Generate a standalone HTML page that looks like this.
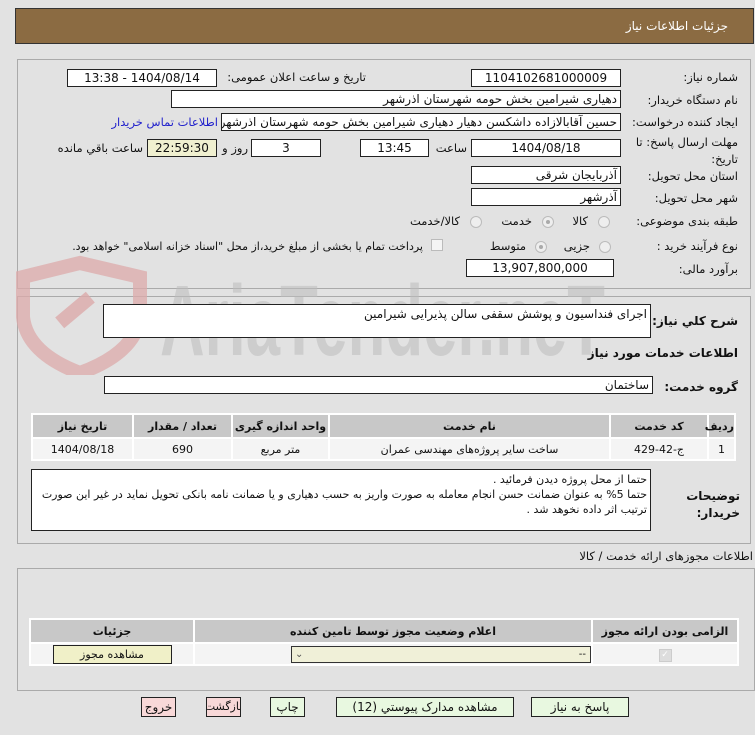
<!DOCTYPE html>
<html><head><meta charset="utf-8"><style>
*{box-sizing:border-box;margin:0;padding:0}
body{width:755px;height:735px;background:#e2e2e2;font-family:"DejaVu Sans","Liberation Sans",sans-serif;font-size:11.5px;color:#111;position:relative;overflow:hidden;direction:rtl}
.a{position:absolute;white-space:nowrap}
.box{position:absolute;background:#fff;border:1px solid #222;height:18px;line-height:16px;text-align:center;font-size:12px;overflow:hidden;white-space:nowrap}
.lbl{position:absolute;white-space:nowrap;text-align:right}
.panel{position:absolute;border:1px solid #aaa}
.radio{position:absolute;width:12px;height:12px;border-radius:50%;border:1px solid #bbb;background:#eee}
.radio.on::after{content:"";position:absolute;left:3px;top:3px;width:4px;height:4px;border-radius:50%;background:#aaa}
table{border-collapse:separate;border-spacing:2px;position:absolute;background:#fff;font-size:11px;table-layout:fixed}
th{background:#c8c8c8;font-weight:bold;height:22px}
td{background:#f4f4f4;text-align:center;height:20px}
.btn{position:absolute;top:697px;height:20px;border:1px solid #222;text-align:center;line-height:18px;font-size:12px;white-space:nowrap;overflow:hidden}
</style></head><body>
<div class="a" style="left:15px;top:8px;width:739px;height:36px;background:#8b6b42;border:1px solid #333"></div>
<div class="a" style="right:27px;top:19px;color:#fff;font-size:12px">جزئیات اطلاعات نیاز</div>

<div class="panel" style="left:17px;top:59px;width:734px;height:230px"></div>
<div class="panel" style="left:17px;top:296px;width:734px;height:248px"></div>

<svg class="a" style="left:15px;top:255px;direction:ltr" width="600" height="120" viewBox="0 0 600 120" direction="ltr">
<path d="M65 8 L125 22 L125 62 Q120 98 65 118 Q12 98 8 62 L8 22 Z" fill="none" stroke="#dcaaaa" stroke-width="14" opacity=".75"/>
<rect x="40" y="48" width="40" height="14" fill="#dcaaaa" opacity=".8" transform="rotate(-40 60 55)"/>
<text x="145" y="100" text-anchor="start" direction="ltr" font-family="Liberation Sans" font-size="100" fill="#bdbdbd" opacity=".55" font-weight="bold" textLength="445" lengthAdjust="spacingAndGlyphs">AriaTender.neT</text>
</svg>

<div class="lbl" style="right:17px;top:70px">شماره نیاز:</div>
<div class="box" style="left:471px;top:69px;width:150px">1104102681000009</div>
<div class="lbl" style="right:389px;top:70px">تاریخ و ساعت اعلان عمومی:</div>
<div class="box" style="left:67px;top:69px;width:150px">1404/08/14 - 13:38</div>

<div class="lbl" style="right:17px;top:93px">نام دستگاه خریدار:</div>
<div class="box" style="left:171px;top:90px;width:450px;text-align:right;padding-right:3px">دهیاری شیرامین بخش حومه شهرستان اذرشهر</div>

<div class="lbl" style="right:17px;top:115px">ایجاد کننده درخواست:</div>
<div class="box" style="left:221px;top:113px;width:400px;text-align:right;padding-right:3px">حسین آقابالازاده داشکسن دهیار دهیاری شیرامین بخش حومه شهرستان اذرشهر</div>
<div class="lbl" style="right:537px;top:115px;color:#22c">اطلاعات تماس خریدار</div>

<div class="lbl" style="right:17px;top:135px">مهلت ارسال پاسخ: تا</div>
<div class="lbl" style="right:17px;top:152px">تاریخ:</div>
<div class="box" style="left:471px;top:139px;width:150px">1404/08/18</div>
<div class="lbl" style="right:288px;top:141px">ساعت</div>
<div class="box" style="left:360px;top:139px;width:69px">13:45</div>
<div class="box" style="left:251px;top:139px;width:70px">3</div>
<div class="lbl" style="right:507px;top:141px">روز و</div>
<div class="box" style="left:147px;top:139px;width:70px;background:#f0f0d0">22:59:30</div>
<div class="lbl" style="right:612px;top:141px">ساعت باقي مانده</div>

<div class="lbl" style="right:17px;top:169px">استان محل تحویل:</div>
<div class="box" style="left:471px;top:166px;width:150px;text-align:right;padding-right:3px">آذربایجان شرقی</div>
<div class="lbl" style="right:17px;top:191px">شهر محل تحویل:</div>
<div class="box" style="left:471px;top:188px;width:150px;text-align:right;padding-right:3px">آذرشهر</div>

<div class="lbl" style="right:17px;top:214px">طبقه بندی موضوعی:</div>
<span class="radio" style="left:598px;top:216px"></span><div class="lbl" style="right:167px;top:214px">کالا</div>
<span class="radio on" style="left:542px;top:216px"></span><div class="lbl" style="right:223px;top:214px">خدمت</div>
<span class="radio" style="left:470px;top:216px"></span><div class="lbl" style="right:295px;top:214px">کالا/خدمت</div>

<div class="lbl" style="right:17px;top:239px">نوع فرآیند خرید :</div>
<span class="radio" style="left:599px;top:241px"></span><div class="lbl" style="right:165px;top:239px">جزیی</div>
<span class="radio on" style="left:535px;top:241px"></span><div class="lbl" style="right:229px;top:239px">متوسط</div>
<div class="a" style="left:431px;top:239px;width:12px;height:12px;border:1px solid #bbb;background:#f4f4f4"></div>
<div class="lbl" style="right:332px;top:240px;font-size:11px">پرداخت تمام یا بخشی از مبلغ خرید،از محل "اسناد خزانه اسلامی" خواهد بود.</div>

<div class="lbl" style="right:17px;top:262px">برآورد مالی:</div>
<div class="box" style="left:466px;top:259px;width:148px">13,907,800,000</div>

<div class="lbl" style="right:17px;top:314px;font-weight:bold;font-size:12px">شرح کلي نیاز:</div>
<div class="a" style="left:103px;top:304px;width:548px;height:34px;background:#fff;border:1px solid #222;text-align:right;padding:2px 3px;font-size:12px">اجرای فنداسیون و پوشش سقفی سالن پذیرایی شیرامین</div>
<div class="lbl" style="right:17px;top:346px;font-weight:bold;font-size:12px">اطلاعات خدمات مورد نیاز</div>
<div class="lbl" style="right:17px;top:380px;font-weight:bold;font-size:12px">گروه خدمت:</div>
<div class="box" style="left:104px;top:376px;width:549px;text-align:right;padding-right:3px">ساختمان</div>

<table style="left:31px;top:413px;width:705px">
<tr><th style="width:25px">ردیف</th><th style="width:96px">کد خدمت</th><th>نام خدمت</th><th style="width:95px">واحد اندازه گیری</th><th style="width:97px">تعداد / مقدار</th><th style="width:99px">تاریخ نیاز</th></tr>
<tr><td>1</td><td>ج-42-429</td><td>ساخت سایر پروژه‌های مهندسی عمران</td><td>متر مربع</td><td>690</td><td>1404/08/18</td></tr>
</table>

<div class="lbl" style="right:15px;top:488px;font-weight:bold;font-size:12px;line-height:17px">توضیحات<br>خریدار:</div>
<div class="a" style="left:31px;top:469px;width:620px;height:62px;background:#fff;border:1px solid #222;text-align:right;padding:2px 3px;white-space:normal;font-size:11px;line-height:15px">حتما از محل پروژه دیدن فرمائید .<br>حتما 5% به عنوان ضمانت حسن انجام معامله به صورت واریز به حسب دهیاری و یا ضمانت نامه بانکی تحویل نماید در غیر این صورت ترتیب اثر داده نخوهد شد .</div>

<div class="lbl" style="right:2px;top:549px">اطلاعات مجوزهای ارائه خدمت / کالا</div>
<div class="panel" style="left:17px;top:568px;width:738px;height:123px"></div>
<table style="left:29px;top:618px;width:710px">
<tr><th style="width:144px">الزامی بودن ارائه مجوز</th><th>اعلام وضعیت مجوز توسط تامین کننده</th><th style="width:162px">جزئیات</th></tr>
<tr><td><span style="display:inline-block;width:13px;height:13px;border:1px solid #ccc;background:#ddd;color:#fff;font-size:9px;line-height:11px">✓</span></td><td><div style="width:300px;height:17px;border:1px solid #333;background:#f0f0d8;text-align:right;padding-right:4px;font-size:10px;line-height:15px;position:relative;margin-left:48px">--<span style="position:absolute;left:3px;color:#555">⌄</span></div></td><td><div style="margin:0 auto;width:119px;height:19px;border:1px solid #222;background:#f0f0c8;line-height:17px">مشاهده مجوز</div></td></tr>
</table>

<div class="btn" style="left:531px;width:98px;background:#e8f8e0">پاسخ به نیاز</div>
<div class="btn" style="left:336px;width:178px;background:#e8f8e0">مشاهده مدارک پیوستي (12)</div>
<div class="btn" style="left:270px;width:35px;background:#e8f8e0">چاپ</div>
<div class="btn" style="left:206px;width:35px;background:#f8d8d8;font-size:11px;text-align:center"><span style="display:inline-block;margin:0 -10px">بازگشت</span></div>
<div class="btn" style="left:141px;width:35px;background:#f8d8d8">خروج</div>
</body></html>
